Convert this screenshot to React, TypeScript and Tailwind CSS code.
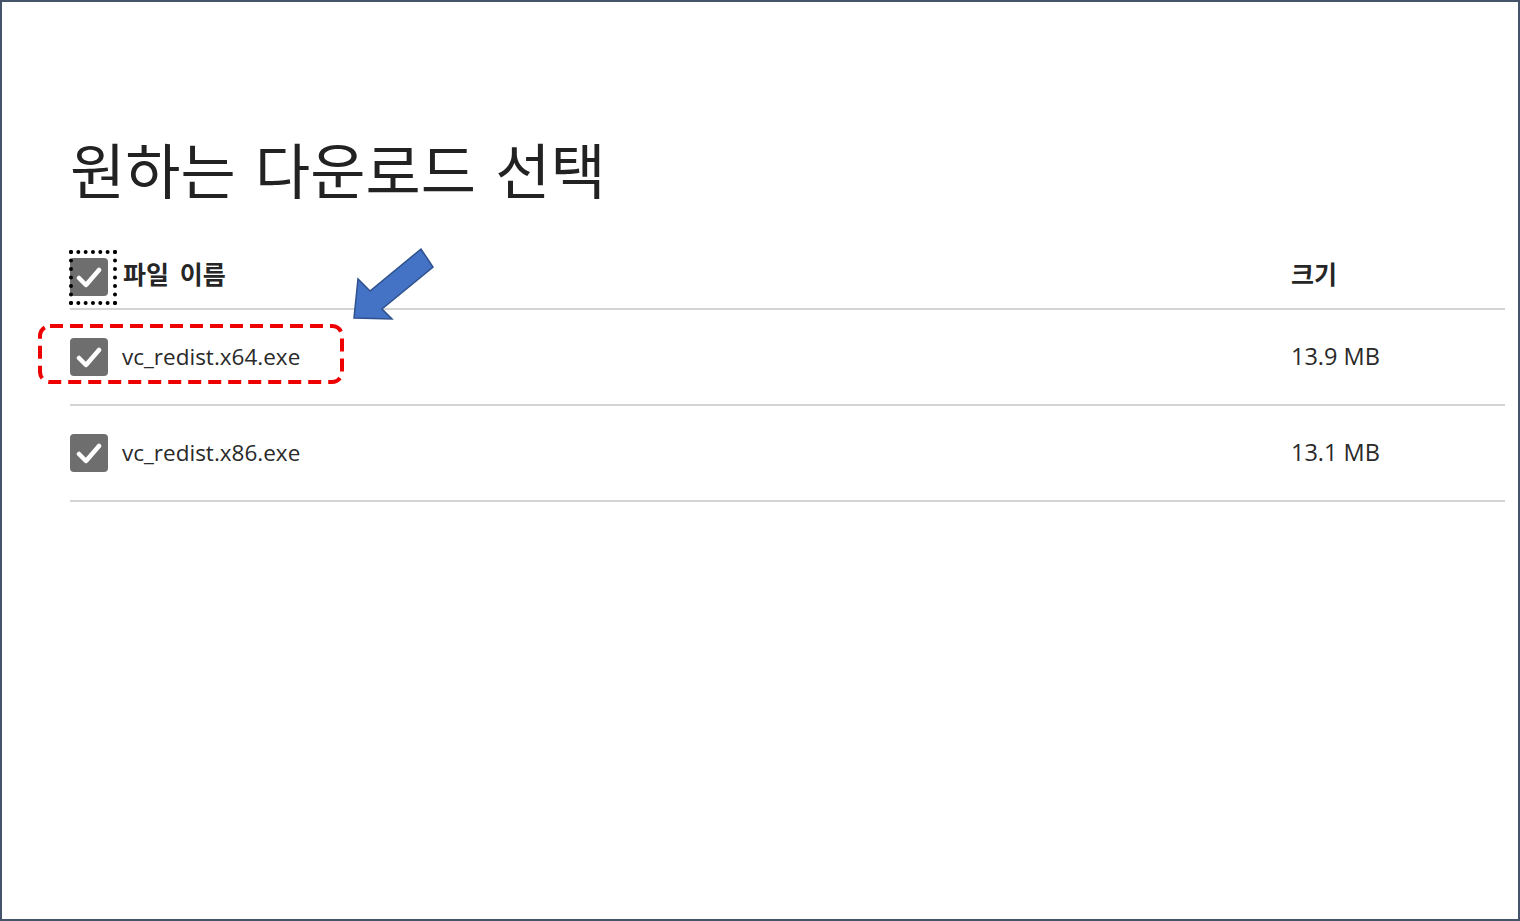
const files = [
  { name: "vc_redist.x64.exe", size: "13.9 MB", marked: true },
  { name: "vc_redist.x86.exe", size: "13.1 MB", marked: false },
];

const latin = "font-['Open_Sans','Noto_Sans_CJK_KR',sans-serif]";
const korean = "font-['Noto_Sans_CJK_KR','Noto_Sans',sans-serif]";

function CheckBox() {
  return (
    <span className="flex h-[38px] w-[38px] shrink-0 items-center justify-center rounded-[4px] bg-[#6e6e6e]">
      <svg width="26" height="22" viewBox="0 0 26 22" fill="none">
        <path d="M3 12 L10 19 L23 4" stroke="white" strokeWidth="4.5" strokeLinecap="round" strokeLinejoin="round" />
      </svg>
    </span>
  );
}

function Arrow() {
  return (
    <svg className="absolute left-[340px] top-[238px]" width="100" height="90" viewBox="340 238 100 90">
      <polygon
        points="352,316 356,277 368,289 419,247 431,265 380,307 390,317"
        fill="#4472c4"
        stroke="#2f528f"
        strokeWidth="1.5"
      />
    </svg>
  );
}

function DashedMark() {
  return (
    <svg className="pointer-events-none absolute left-[-32px] top-[14px]" width="306" height="60" viewBox="0 0 306 60">
      <rect x="2" y="2" width="302" height="56" rx="10" fill="none" stroke="#ee0000" strokeWidth="4" strokeDasharray="13 7" />
    </svg>
  );
}

export default function App() {
  return (
    <div className="relative h-[921px] w-[1520px] overflow-hidden border-2 border-[#44546a] bg-white text-[#262626]">
      <div className="pl-[68px] pr-[13px] pt-[122px]">
        <h1 className={`${korean} text-[60px] font-normal leading-[88px] text-[#222] [word-spacing:6px]`}>원하는 다운로드 선택</h1>

        <div className="mt-[39px]">
          <div className="flex h-[59px] items-center border-b-2 border-[#d4d4d4] pb-[6px]">
            <div className="relative flex items-center">
              <CheckBox />
              <span className="pointer-events-none absolute -left-[1px] -top-[8px] h-[55px] w-[48px] border-[4px] border-dotted border-black" />
            </div>
            <span className={`${korean} mb-[5px] ml-[15px] text-[25px] font-bold [word-spacing:5px]`}>파일 이름</span>
            <span className={`${korean} mb-[5px] ml-auto w-[214px] text-[25px] font-bold`}>크기</span>
          </div>

          {files.map((f) => (
            <div key={f.name} className="relative flex h-[96px] items-center border-b-2 border-[#d4d4d4]">
              <CheckBox />
              <span className={`${latin} ml-[14px] text-[22.5px] text-[#2a2a2a]`}>{f.name}</span>
              <span className={`${latin} ml-auto w-[214px] text-[23.5px] text-[#2a2a2a]`}>{f.size}</span>
              {f.marked && <DashedMark />}
            </div>
          ))}
        </div>
      </div>
      <Arrow />
    </div>
  );
}
